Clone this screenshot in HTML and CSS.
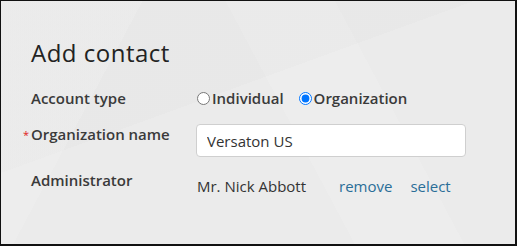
FILE: index.html
```html
<!DOCTYPE html>
<html lang="en">
	<head>
		<meta charset="UTF-8" />
		<meta name="viewport" content="width=device-width, initial-scale=1.0" />
		<title>Add contact</title>
		<link rel="stylesheet" href="styles.css">
	</head>
	<body>
		<div class="panel">
			<h1>Add contact</h1>
			<div class="form-row">
				<div class="form-label">Account type</div>
				<div class="form-value radio-group">
					<label class="radio">
						<input type="radio" name="type" value="individual" />
						Individual
					</label>
					<label class="radio">
						<input type="radio" name="type" value="organization" checked />
						Organization
					</label>
				</div>
			</div>
			<div class="form-row">
				<label class="form-label required" for="orgname">Organization name</label>
				<div class="form-value">
					<input type="text" id="orgname" class="text-input" value="Versaton US" />
				</div>
			</div>
			<div class="form-row">
				<div class="form-label">Administrator</div>
				<div class="form-value admin">
					<span class="admin-name">Mr. Nick Abbott</span>
					<a href="#" class="link">remove</a>
					<a href="#" class="link">select</a>
				</div>
			</div>
		</div>
	</body>
</html>
```

FILE: styles.css
```css
* {
	margin: 0;
	padding: 0;
	box-sizing: border-box;
}

html,
body {
	width: 517px;
	height: 246px;
	overflow: hidden;
}

body {
	font-family: "Open Sans", "Liberation Sans", sans-serif;
	color: #333;
	background-color: #ececec;
}

.panel {
	width: 517px;
	height: 246px;
	border: 1px solid #111;
	border-right-width: 2px;
	border-bottom-width: 2px;
	padding: 36px 30px 0 30px;
	background-color: #ebebeb;
	background-image:
		linear-gradient(118deg, rgba(255, 255, 255, 0.12) 0 22%, transparent 22% 100%),
		linear-gradient(62deg, transparent 0 55%, rgba(255, 255, 255, 0.1) 55% 72%, transparent 72% 100%),
		linear-gradient(160deg, rgba(0, 0, 0, 0.01) 0 40%, transparent 40% 100%);
}

h1 {
	font-size: 24px;
	font-weight: 500;
	line-height: 32px;
	color: #222;
	letter-spacing: 0.5px;
	margin-bottom: 19px;
}

.form-row {
	display: grid;
	grid-template-columns: 165px 1fr;
	align-items: start;
}

.form-row + .form-row {
	margin-top: 16px;
}

.form-row:last-child {
	margin-top: 13px;
}

.form-label {
	font-size: 15px;
	font-weight: 600;
	line-height: 20px;
	color: #3a3a3a;
}

.required::before {
	content: "*";
	display: inline-block;
	width: 8px;
	margin-left: -8px;
	color: #e02020;
	font-size: 11px;
	font-weight: 400;
	vertical-align: 1px;
}

.form-value {
	font-size: 15px;
	line-height: 20px;
}

.radio-group {
	display: flex;
	gap: 14px;
}

.radio {
	display: flex;
	align-items: center;
	gap: 2px;
	font-weight: 600;
	color: #3a3a3a;
	cursor: pointer;
}

.radio input {
	width: 13px;
	height: 13px;
	margin: 0 0 0 1px;
}

.text-input {
	width: 270px;
	height: 33px;
	padding: 0 10px;
	font-family: "Open Sans", "Liberation Sans", sans-serif;
	font-size: 15px;
	color: #333;
	background-color: #fff;
	border: 1px solid #cfcfcf;
	border-radius: 4px;
	outline: none;
}

.admin {
	display: flex;
	margin-top: 6px;
	padding-left: 1px;
}

.admin-name {
	width: 142px;
}

.link {
	color: #2a6e98;
	text-decoration: none;
	margin-right: 18px;
}
```
